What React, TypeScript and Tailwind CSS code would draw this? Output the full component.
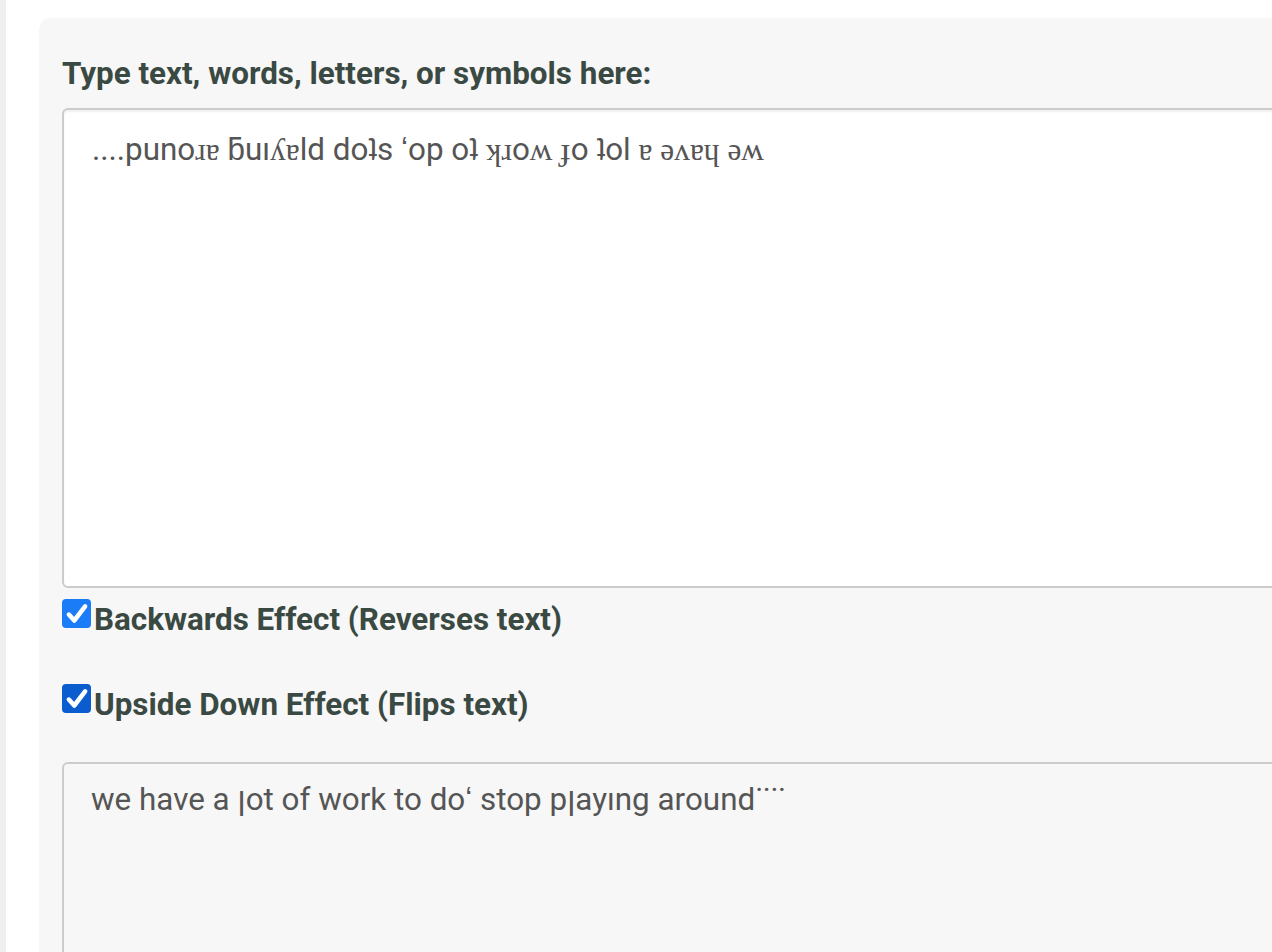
import React from "react";

const serif = "font-['Liberation_Serif','DejaVu_Serif',serif]";

const typed: [string, boolean][] = [
  ["....puno", false],
  ["ɹɐ", true],
  [" ƃuı", false],
  ["ʎɐ", true],
  ["ld doʇs ʻop oʇ ", false],
  ["ʞɹ", true],
  ["o", false],
  ["ʍ", true],
  [" ", false],
  ["ɟ", true],
  ["o ʇol ", false],
  ["ɐ ǝʌɐɥ ǝʍ", true],
];

function Check({ color }: { color: string }) {
  return (
    <span className={`flex h-[29px] w-[29px] shrink-0 items-center justify-center rounded-[4px] ${color}`}>
      <svg viewBox="0 0 24 24" className="h-[26px] w-[26px]" fill="none" stroke="white" strokeWidth="4.2" strokeLinecap="round" strokeLinejoin="round">
        <path d="M4.5 12.5l5 5.5 10-13" />
      </svg>
    </span>
  );
}

export default function App() {
  return (
    <div className="flex h-[952px] w-[1272px] overflow-hidden bg-white font-['Roboto','Liberation_Sans',sans-serif]">
      <div className="w-[6px] shrink-0 bg-[#eef0ef]" />
      <div className="shrink-0 pl-[33px] pt-[18px]">
        <div className="w-[1400px] rounded-tl-[12px] bg-[#f7f7f7] pl-[23px] pt-[36px]">
          {/* Label */}
          <label className="block text-[31.4px] font-bold leading-[40px] text-[#3a4a43]">
            Type text, words, letters, or symbols here:
          </label>
          {/* Input */}
          <div className="mt-[14px] h-[480px] w-[1300px] rounded-[6px] border-2 border-[#cccccc] bg-white px-[28px] pt-[20px] text-[31.4px] leading-[40px] text-[#555555] shadow-[inset_0_2px_2px_rgba(0,0,0,0.06)]">
            {typed.map(([t, s], i) => (
              <span key={i} className={s ? serif : ""}>
                {t}
              </span>
            ))}
          </div>
          {/* Options */}
          <div className="mt-[11px] flex items-start text-[31.4px] font-bold leading-[40px] text-[#3a4a43]">
            <Check color="bg-[#1a7cf6]" />
            <span className="ml-[3px] mt-[1px]">Backwards Effect (Reverses text)</span>
          </div>
          <div className="mt-[44px] flex items-start text-[31.4px] font-bold leading-[40px] text-[#3a4a43]">
            <Check color="bg-[#0b5ccf]" />
            <span className="ml-[3px] mt-[1px]">Upside Down Effect (Flips text)</span>
          </div>
          {/* Output */}
          <div className="mt-[37px] h-[300px] w-[1300px] rounded-[6px] border-2 border-[#cccccc] bg-[#f7f7f7] px-[27px] pt-[16px] text-[31.4px] leading-[40px] text-[#555555]">
            we have a ןot of work to doʻ stop pןayıng around˙˙˙˙
          </div>
        </div>
      </div>
    </div>
  );
}
